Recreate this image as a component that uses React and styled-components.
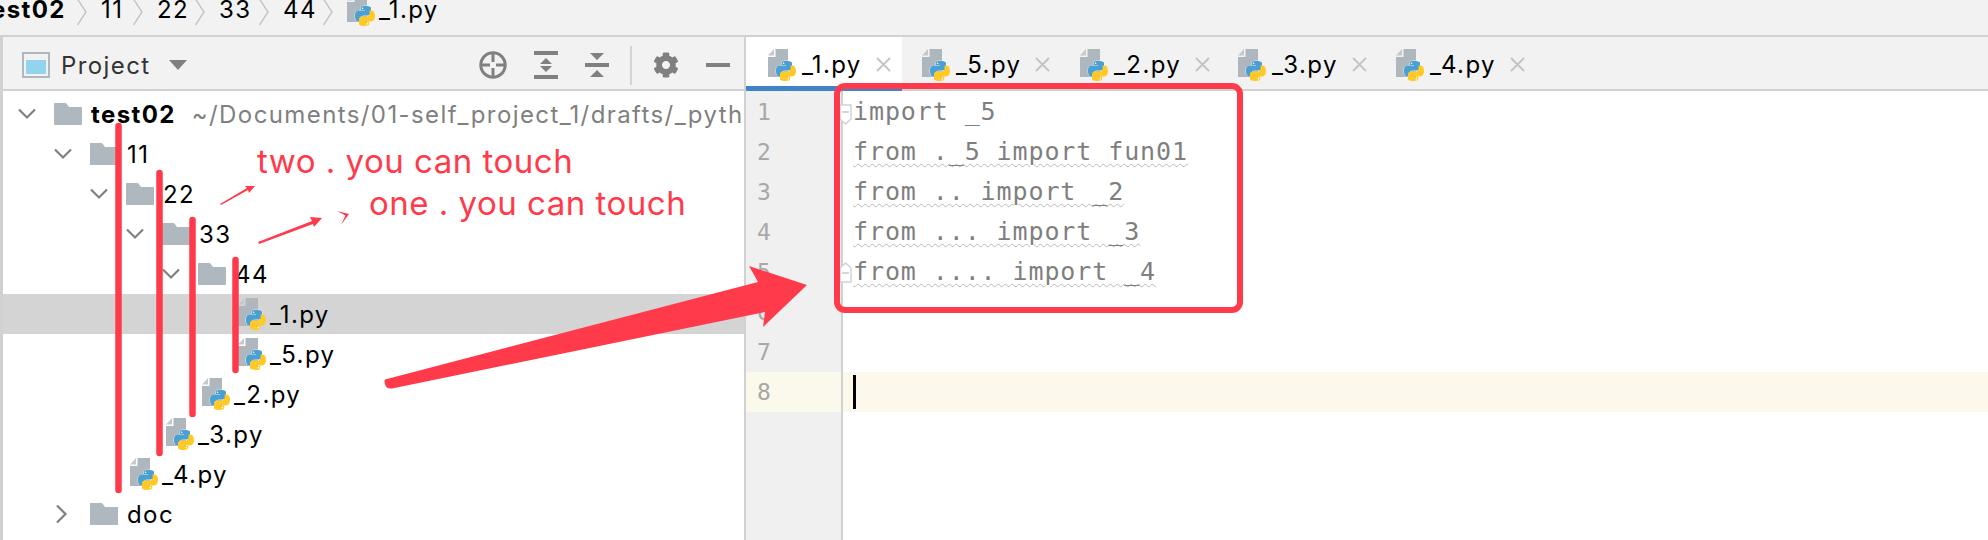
import React from "react";
import styled, { createGlobalStyle } from "styled-components";
import { FaCog } from "react-icons/fa";

const uiFont = `Inter, "Noto Sans", sans-serif`;
const monoFont = `"DejaVu Sans Mono", "Liberation Mono", monospace`;
const red = "#ff3b4b";

const GlobalStyle = createGlobalStyle`
  html, body {
    margin: 0;
    background: #fff;
    overflow: hidden;
  }
`;

const Page = styled.div`
  position: relative;
  width: 1988px;
  height: 540px;
  overflow: hidden;
  font-family: ${uiFont};
  color: #000;
`;

const Breadcrumb = styled.div`
  box-sizing: border-box;
  height: 37px;
  display: flex;
  align-items: flex-end;
  padding: 0 0 9px 0;
  background: #f2f2f2;
  border-bottom: 2px solid #d1d1d1;
  overflow: hidden;
`;

const Crumb = styled.span`
  width: ${(p) => p.$width}px;
  margin-left: ${(p) => p.$offset || 0}px;
  margin-bottom: 3px;
  font-size: 24px;
  line-height: 26px;
  letter-spacing: 1.4px;
  font-weight: ${(p) => (p.$bold ? 700 : 400)};
  white-space: nowrap;
  flex: none;
`;

const CrumbArrow = styled.svg`
  width: 10px;
  height: 28px;
  flex: none;
  margin-bottom: -1px;
`;

const CrumbGap = styled.span`
  width: 14px;
  flex: none;
`;

const Main = styled.div`
  display: flex;
  height: 503px;
`;

const ProjectPanel = styled.div`
  box-sizing: border-box;
  width: 746px;
  flex: none;
  border-left: 3px solid #d1d1d1;
  border-right: 2px solid #d1d1d1;
  overflow: hidden;
`;

const PanelHeader = styled.div`
  box-sizing: border-box;
  height: 54px;
  display: flex;
  align-items: center;
  background: #f2f2f2;
  border-bottom: 2px solid #d1d1d1;
  padding: 4px 14px 0 19px;
`;

const PanelTitle = styled.span`
  font-size: 24px;
  letter-spacing: 1.4px;
  color: #333;
  margin-left: 11px;
`;

const Caret = styled.span`
  width: 0;
  height: 0;
  margin-left: 18px;
  border-left: 9px solid transparent;
  border-right: 9px solid transparent;
  border-top: 10px solid #808080;
`;

const ToolGroup = styled.div`
  margin-left: auto;
  display: flex;
  align-items: center;
  gap: 27px;
`;

const ToolDivider = styled.span`
  width: 2px;
  height: 39px;
  margin: 0 -6px;
  background: #d4d4d4;
`;

const Tree = styled.div`
  padding-top: 3px;
`;

const TreeRow = styled.div`
  box-sizing: border-box;
  height: 40px;
  display: flex;
  align-items: center;
  padding-left: ${(p) => p.$indent}px;
  background: ${(p) => (p.$selected ? "#d4d4d4" : "transparent")};
  white-space: nowrap;
`;

const ChevronSlot = styled.span`
  width: 36px;
  flex: none;
  display: flex;
  align-items: center;
`;

const RowLabel = styled.span`
  margin-left: ${(p) => p.$gap}px;
  font-size: 24px;
  letter-spacing: 1.4px;
  font-weight: ${(p) => (p.$bold ? 700 : 400)};
`;

const RowHint = styled.span`
  margin-left: 16px;
  font-size: 24px;
  letter-spacing: 1.4px;
  color: #808080;
`;

const EditorPanel = styled.div`
  flex: 1;
  min-width: 0;
  display: flex;
  flex-direction: column;
`;

const TabBar = styled.div`
  box-sizing: border-box;
  height: 54px;
  display: flex;
  background: #f2f2f2;
  border-bottom: 2px solid #d1d1d1;
`;

const Tab = styled.div`
  box-sizing: border-box;
  width: ${(p) => (p.$active ? 156 : 158)}px;
  height: 54px;
  flex: none;
  display: flex;
  align-items: center;
  padding: 6px 0 0 ${(p) => (p.$active ? 22 : 20)}px;
  background: ${(p) => (p.$active ? "#fff" : "transparent")};
  border-bottom: 5px solid ${(p) => (p.$active ? "#4083c9" : "transparent")};
`;

const TabLabel = styled.span`
  margin-left: 6px;
  font-size: 24px;
  letter-spacing: 1.4px;
`;

const TabClose = styled.svg`
  width: 15px;
  height: 15px;
  margin-left: 14px;
  flex: none;
`;

const EditorBody = styled.div`
  flex: 1;
  display: flex;
`;

const Gutter = styled.div`
  box-sizing: border-box;
  width: 97px;
  flex: none;
  padding-top: 1px;
  background: #f0f0f0;
  border-right: 2px solid #d1d1d1;
`;

const GutterLine = styled.div`
  box-sizing: border-box;
  height: 40px;
  padding-left: 11px;
  font-family: ${monoFont};
  font-size: 23px;
  line-height: 40px;
  color: #a8a8a8;
  background: ${(p) => (p.$current ? "#fbf8ec" : "transparent")};
`;

const CodeArea = styled.div`
  flex: 1;
  min-width: 0;
  padding-top: 1px;
`;

const CodeLine = styled.div`
  position: relative;
  box-sizing: border-box;
  height: 40px;
  padding-left: 10px;
  font-family: ${monoFont};
  font-size: 25px;
  letter-spacing: 0.9px;
  line-height: 40px;
  white-space: pre;
  color: #7f7f7f;
  background: ${(p) => (p.$current ? "#fcf9ec" : "transparent")};
`;

const CodeText = styled.span`
  text-decoration: ${(p) => (p.$weak ? "underline wavy #b9b9b9 1px" : "none")};
  text-underline-offset: 3px;
`;

const TextCaret = styled.span`
  display: inline-block;
  width: 3px;
  height: 34px;
  margin-top: 3px;
  background: #000;
`;

const FoldMark = styled.svg`
  position: absolute;
  left: -4px;
  top: ${(p) => p.$top}px;
  width: 13px;
  height: 21px;
`;

const AnnotationLayer = styled.svg`
  position: absolute;
  left: 0;
  top: 0;
  width: 1988px;
  height: 540px;
  pointer-events: none;
`;

const AnnotationText = styled.span`
  position: absolute;
  left: ${(p) => p.$left}px;
  top: ${(p) => p.$top}px;
  font-size: 33px;
  line-height: 38px;
  letter-spacing: 0.5px;
  color: ${red};
  white-space: nowrap;
`;

const HighlightBox = styled.div`
  position: absolute;
  left: 834px;
  top: 83px;
  width: 409px;
  height: 230px;
  box-sizing: border-box;
  border: 6px solid ${red};
  border-radius: 11px;
`;

const PythonFile = () => (
  <svg width="28" height="32" viewBox="0 0 28 32" style={{ flex: "none" }}>
    <path d="M7.5 0H20V28H0V8H7.5Z" fill="#aeb7bd" />
    <path d="M0 6.5L6 0V6.5Z" fill="#c3c9cd" />
    <g transform="translate(8 12)">
      <path
        d="M9.8 0C5.5 0 5.8 1.9 5.8 1.9V4H10V4.6H3.9C3.9 4.6 0 4.2 0 9.9C0 15.6 3.4 15.4 3.4 15.4H5.4V12.8C5.4 12.8 5.3 9.4 8.8 9.4H13C13 9.4 16 9.4 16 6.5V2C16 2 16.5 0 9.8 0Z"
        fill="#4a9fd3"
        stroke="#fff"
        strokeOpacity="0.75"
        strokeWidth="1"
        paintOrder="stroke"
      />
      <circle cx="7.6" cy="2.2" r="0.8" fill="#fff" />
      <g transform="rotate(180 10 10)">
        <path
          d="M9.8 0C5.5 0 5.8 1.9 5.8 1.9V4H10V4.6H3.9C3.9 4.6 0 4.2 0 9.9C0 15.6 3.4 15.4 3.4 15.4H5.4V12.8C5.4 12.8 5.3 9.4 8.8 9.4H13C13 9.4 16 9.4 16 6.5V2C16 2 16.5 0 9.8 0Z"
          fill="#ffca28"
        />
        <circle cx="7.6" cy="2.2" r="0.8" fill="#fff" />
      </g>
    </g>
  </svg>
);

const Folder = () => (
  <svg width="28" height="22" viewBox="0 0 28 22" style={{ flex: "none" }}>
    <path d="M0 0H12L15 4H28V22H0Z" fill="#afb8bf" />
  </svg>
);

const Chevron = ({ open }) => (
  <svg width="18" height="18" viewBox="0 0 18 18">
    <path
      d={open ? "M1 4.5L9 12.5L17 4.5" : "M3 0.5L11.5 9L3 17.5"}
      fill="none"
      stroke="#808080"
      strokeWidth="2.2"
    />
  </svg>
);

const ProjectIcon = () => (
  <svg width="28" height="26" viewBox="0 0 28 26">
    <rect width="28" height="26" fill="#afb8bf" />
    <rect x="2" y="2" width="24" height="22" fill="#f2f2f2" />
    <rect x="4" y="8" width="20" height="14" fill="#92d3ee" />
  </svg>
);

const CrosshairIcon = () => (
  <svg width="28" height="28" viewBox="0 0 28 28">
    <circle cx="14" cy="14" r="12.2" fill="none" stroke="#808080" strokeWidth="3" />
    <path d="M14 2V11M14 17V26M2 14H11M17 14H26" stroke="#808080" strokeWidth="3" />
  </svg>
);

const ExpandIcon = () => (
  <svg width="24" height="28" viewBox="0 0 24 28">
    <rect width="24" height="4" fill="#808080" />
    <rect y="24" width="24" height="4" fill="#808080" />
    <path d="M12 7L18 13H6ZM12 21L6 15H18Z" fill="#808080" />
  </svg>
);

const CollapseIcon = () => (
  <svg width="24" height="28" viewBox="0 0 24 28">
    <rect y="12" width="24" height="4" fill="#808080" />
    <path d="M5 2H19L12 9ZM12 19L19 26H5Z" fill="#808080" />
  </svg>
);

const MinusIcon = () => (
  <svg width="24" height="4" viewBox="0 0 24 4">
    <rect width="24" height="4" fill="#808080" />
  </svg>
);

const crumbs = [
  { label: "test02", bold: true, width: 96, offset: -19 },
  { label: "11", width: 32 },
  { label: "22", width: 38 },
  { label: "33", width: 40 },
  { label: "44", width: 40 },
];

const treeRows = [
  { kind: "folder", depth: 0, open: true, label: "test02", bold: true, hint: "~/Documents/01-self_project_1/drafts/_python_import" },
  { kind: "folder", depth: 1, open: true, label: "11" },
  { kind: "folder", depth: 2, open: true, label: "22" },
  { kind: "folder", depth: 3, open: true, label: "33" },
  { kind: "folder", depth: 4, open: true, label: "44" },
  { kind: "file", depth: 4, label: "_1.py", selected: true },
  { kind: "file", depth: 4, label: "_5.py" },
  { kind: "file", depth: 3, label: "_2.py" },
  { kind: "file", depth: 2, label: "_3.py" },
  { kind: "file", depth: 1, label: "_4.py" },
  { kind: "folder", depth: 1, open: false, label: "doc" },
];

const tabs = ["_1.py", "_5.py", "_2.py", "_3.py", "_4.py"];

const codeLines = [
  { text: "import _5" },
  { text: "from ._5 import fun01", weak: true },
  { text: "from .. import _2", weak: true },
  { text: "from ... import _3", weak: true },
  { text: "from .... import _4", weak: true },
  { text: "" },
  { text: "" },
  { text: "", current: true },
];

const App = () => {
  return (
    <Page>
      <GlobalStyle />
      <Breadcrumb>
        {crumbs.map((c) => (
          <React.Fragment key={c.label}>
            <Crumb $bold={c.bold} $width={c.width} $offset={c.offset}>{c.label}</Crumb>
            <CrumbArrow viewBox="0 0 10 28">
              <path d="M0.5 0L9 13L0.5 26" fill="none" stroke="#c4c4c4" strokeWidth="1.4" />
            </CrumbArrow>
            <CrumbGap />
          </React.Fragment>
        ))}
        <PythonFile />
        <Crumb $width={60} $offset={4}>_1.py</Crumb>
      </Breadcrumb>

      <Main>
        <ProjectPanel>
          <PanelHeader>
            <ProjectIcon />
            <PanelTitle>Project</PanelTitle>
            <Caret />
            <ToolGroup>
              <CrosshairIcon />
              <ExpandIcon />
              <CollapseIcon />
              <ToolDivider />
              <FaCog size={26} color="#7f7f7f" />
              <MinusIcon />
            </ToolGroup>
          </PanelHeader>
          <Tree>
            {treeRows.map((row) =>
              row.kind === "folder" ? (
                <TreeRow key={row.label} $indent={15 + row.depth * 36}>
                  <ChevronSlot><Chevron open={row.open} /></ChevronSlot>
                  <Folder />
                  <RowLabel $gap={9} $bold={row.bold}>{row.label}</RowLabel>
                  {row.hint && <RowHint>{row.hint}</RowHint>}
                </TreeRow>
              ) : (
                <TreeRow key={row.label} $indent={91 + row.depth * 36} $selected={row.selected}>
                  <PythonFile />
                  <RowLabel $gap={4}>{row.label}</RowLabel>
                </TreeRow>
              )
            )}
          </Tree>
        </ProjectPanel>

        <EditorPanel>
          <TabBar>
            {tabs.map((name, i) => (
              <Tab key={name} $active={i === 0}>
                <PythonFile />
                <TabLabel>{name}</TabLabel>
                <TabClose viewBox="0 0 15 15">
                  <path d="M1 1L14 14M14 1L1 14" stroke="#c4c4c4" strokeWidth="1.8" />
                </TabClose>
              </Tab>
            ))}
          </TabBar>
          <EditorBody>
            <Gutter>
              {codeLines.map((line, i) => (
                <GutterLine key={i} $current={line.current}>{i + 1}</GutterLine>
              ))}
            </Gutter>
            <CodeArea>
              {codeLines.map((line, i) => (
                <CodeLine key={i} $current={line.current}>
                  {line.current && <TextCaret />}
                  <CodeText $weak={line.weak}>{line.text}</CodeText>
                  {i === 0 && (
                    <FoldMark $top={12} viewBox="0 0 13 21">
                      <path d="M1 1H12V15L6.5 20L1 15Z" fill="#fff" stroke="#d1d1d1" strokeWidth="1.4" />
                      <path d="M3 8H10" stroke="#c4c4c4" strokeWidth="1.4" />
                    </FoldMark>
                  )}
                  {i === 4 && (
                    <FoldMark $top={10} viewBox="0 0 13 21">
                      <path d="M1 20H12V6L6.5 1L1 6Z" fill="#fff" stroke="#d1d1d1" strokeWidth="1.4" />
                      <path d="M3 11H10" stroke="#c4c4c4" strokeWidth="1.4" />
                    </FoldMark>
                  )}
                </CodeLine>
              ))}
            </CodeArea>
          </EditorBody>
        </EditorPanel>
      </Main>

      <AnnotationLayer viewBox="0 0 1988 540">
        <g stroke={red} strokeWidth="6.5" strokeLinecap="round">
          <path d="M118.5 126V490" />
          <path d="M159.5 173V453" />
          <path d="M192.5 220V414" />
          <path d="M235.5 260V370" />
        </g>
        <g fill={red}>
          <path d="M220 204L247 188L245 186L255 186L249 193L248 190L221 205Z" />
          <path d="M258 242L312 221L310 217L322 218L314 227L313 224L259 244Z" />
          <path d="M337 211L349 214L341 225L345.5 215.5Z" />
          <path d="M385 379.5L758 282L749 266L807 285L763 327L765 312L392 388.5Q386 389 385 384Q384 381 385 379.5Z" />
        </g>
      </AnnotationLayer>
      <AnnotationText $left={257} $top={142}>two . you can touch</AnnotationText>
      <AnnotationText $left={369} $top={184}>one . you can touch</AnnotationText>
      <HighlightBox />
    </Page>
  );
};

export default App;
